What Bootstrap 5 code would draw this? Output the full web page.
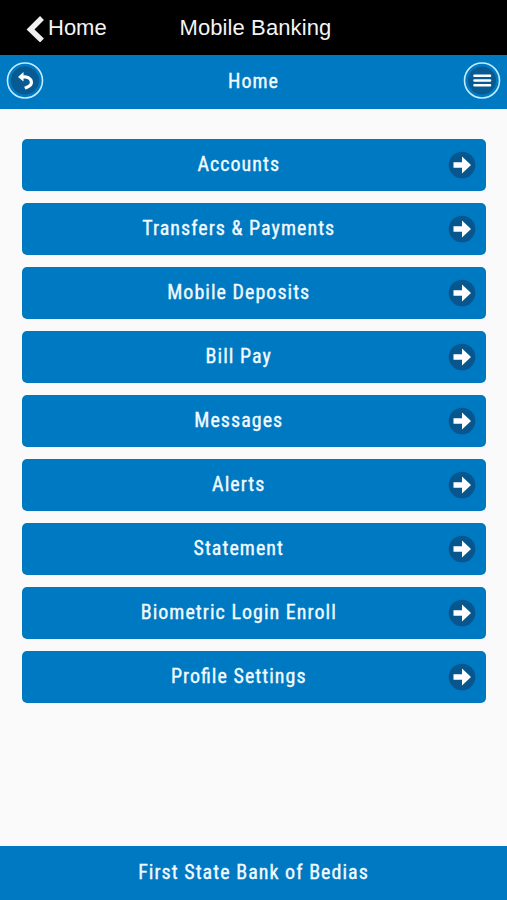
<!DOCTYPE html>
<html lang="en">
<head>
<meta charset="utf-8">
<meta name="viewport" content="width=device-width, initial-scale=1">
<title>Mobile Banking</title>
<link href="https://cdn.jsdelivr.net/npm/bootstrap@5.3.0/dist/css/bootstrap.min.css" rel="stylesheet">
<style>
  body { background: #fafafa; font-family: "Roboto Condensed", Roboto, sans-serif; font-stretch: 75%; }
  .topbar { height: 55px; background: #000; font: 22px/26px "Liberation Sans", Arial, sans-serif; color: #f4f4f4; }
  .topbar-side { width: 179.500px; padding-left: 25px; }
  .topbar-title { letter-spacing: .1px; }
  .brand-blue { background: #0079c3; color: #f2fbff; font-size: 20px; line-height: 24px; letter-spacing: 1.03px; font-weight: 400; -webkit-text-stroke: .35px; font-feature-settings: "liga" 1; }
  .page-head { height: 54px; padding: 0 6px 3px; }
  .menu-list { padding: 30px 21px 0 22px; gap: 12px; }
  .menu-item { height: 52px; border-radius: 5px; padding: 0 10.500px 0 0; }
  .menu-item:hover { color: #fff; }
  .menu-label { padding: 0 0 2px 8px; }
  .page-foot { height: 54px; padding-bottom: 2px; }
</style>
</head>
<body>
<div class="d-flex flex-column vh-100">
  <header class="topbar d-flex align-items-center flex-shrink-0">
    <a href="#" class="topbar-side d-flex align-items-center text-reset text-decoration-none">
      <svg width="19" height="28" viewBox="0 0 19 28"><path d="M17 4 5.500 15.500 17 26.500" fill="none" stroke="#f0f0f0" stroke-width="5.500"/></svg>
      <span class="ms-1">Home</span>
    </a>
    <span class="topbar-title">Mobile Banking</span>
  </header>
  <nav class="brand-blue page-head d-flex align-items-center justify-content-between flex-shrink-0">
    <a href="#" class="d-flex" aria-label="Back">
      <svg width="38" height="38" viewBox="0 0 38 38"><circle cx="19" cy="18.500" r="14" fill="#075a92"/><circle cx="19" cy="18.500" r="17.500" fill="none" stroke="#c4ecff" stroke-width="1.600"/><path d="M12 15 17.500 10v3.200c5.500 0 9.500 2.700 9.500 7 0 3.400-3 6-7.600 7.300l-1.200-2.700c3.600-1.100 5.600-2.500 5.600-4.500 0-2.400-2.300-3.900-6.300-3.900v3.100z" fill="#fff"/></svg>
    </a>
    <span>Home</span>
    <a href="#" class="d-flex" aria-label="Menu">
      <svg width="38" height="38" viewBox="0 0 38 38"><circle cx="19" cy="18.500" r="14" fill="#075a92"/><circle cx="19" cy="18.500" r="17.500" fill="none" stroke="#c4ecff" stroke-width="1.600"/><path d="M11.500 13.700h15.500M11.500 18.500h15.500M11.500 23.300h15.500" stroke="#fff" stroke-width="2.600" stroke-linecap="round"/></svg>
    </a>
  </nav>
  <svg class="d-none"><symbol id="go" viewBox="0 0 28 28"><circle cx="14" cy="14" r="13.300" fill="#07578e"/><path d="M5.500 11.300h8.500V5.500l9 8.500-9 8.500v-5.800H5.500z" fill="#fff"/></symbol></svg>
  <main class="menu-list d-flex flex-column flex-grow-1">
    <a href="#" class="menu-item brand-blue d-flex align-items-center text-decoration-none"><span class="menu-label flex-grow-1 text-center">Accounts</span><svg width="28" height="28"><use href="#go"/></svg></a>
    <a href="#" class="menu-item brand-blue d-flex align-items-center text-decoration-none"><span class="menu-label flex-grow-1 text-center">Transfers &amp; Payments</span><svg width="28" height="28"><use href="#go"/></svg></a>
    <a href="#" class="menu-item brand-blue d-flex align-items-center text-decoration-none"><span class="menu-label flex-grow-1 text-center">Mobile Deposits</span><svg width="28" height="28"><use href="#go"/></svg></a>
    <a href="#" class="menu-item brand-blue d-flex align-items-center text-decoration-none"><span class="menu-label flex-grow-1 text-center">Bill Pay</span><svg width="28" height="28"><use href="#go"/></svg></a>
    <a href="#" class="menu-item brand-blue d-flex align-items-center text-decoration-none"><span class="menu-label flex-grow-1 text-center">Messages</span><svg width="28" height="28"><use href="#go"/></svg></a>
    <a href="#" class="menu-item brand-blue d-flex align-items-center text-decoration-none"><span class="menu-label flex-grow-1 text-center">Alerts</span><svg width="28" height="28"><use href="#go"/></svg></a>
    <a href="#" class="menu-item brand-blue d-flex align-items-center text-decoration-none"><span class="menu-label flex-grow-1 text-center">Statement</span><svg width="28" height="28"><use href="#go"/></svg></a>
    <a href="#" class="menu-item brand-blue d-flex align-items-center text-decoration-none"><span class="menu-label flex-grow-1 text-center">Biometric Login Enroll</span><svg width="28" height="28"><use href="#go"/></svg></a>
    <a href="#" class="menu-item brand-blue d-flex align-items-center text-decoration-none"><span class="menu-label flex-grow-1 text-center">Profile Settings</span><svg width="28" height="28"><use href="#go"/></svg></a>
  </main>
  <footer class="brand-blue page-foot d-flex align-items-center justify-content-center flex-shrink-0"><span>First State Bank of Bedias</span></footer>
</div>
<script src="https://cdn.jsdelivr.net/npm/bootstrap@5.3.0/dist/js/bootstrap.bundle.min.js"></script>
</body>
</html>
